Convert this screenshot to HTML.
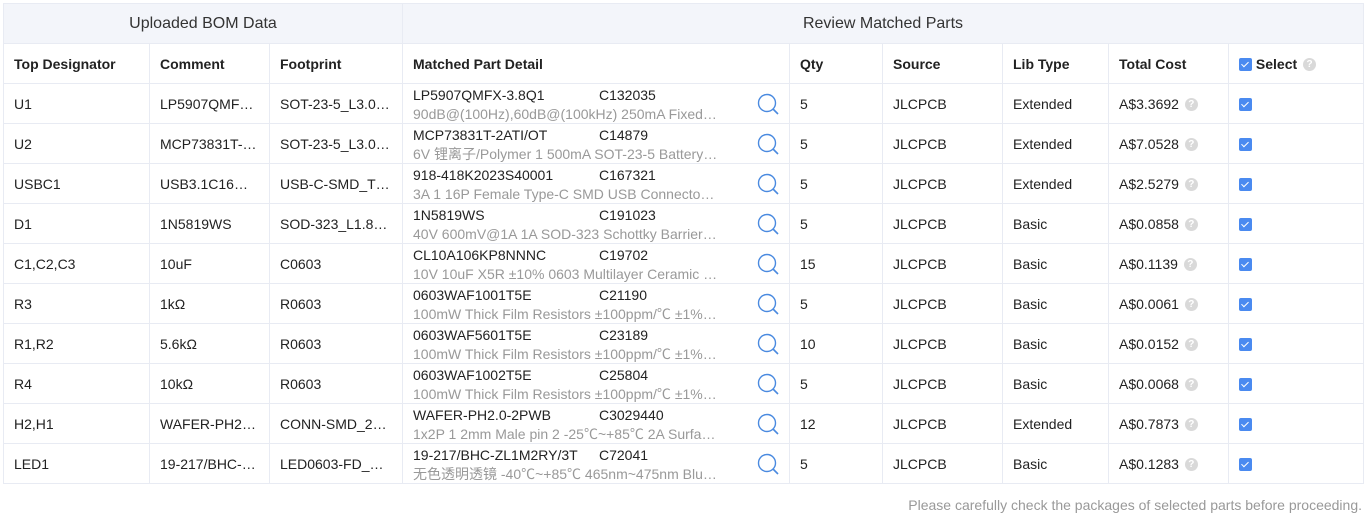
<!DOCTYPE html><html><head><meta charset="utf-8"><style>
body{margin:0;background:#fff;font-family:"Liberation Sans","Noto Sans CJK SC",sans-serif;font-size:14px;color:#222;}
table{position:absolute;left:3px;top:3px;border-collapse:collapse;table-layout:fixed;width:1360px;}
td,th{border:1px solid #e8ebf3;height:39px;padding:0 12px 0 10px;white-space:nowrap;overflow:hidden;text-overflow:ellipsis;text-align:left;line-height:16px}
tr.g th{background:#f3f5fa;font-weight:normal;font-size:16px;text-align:center;color:#333;padding:0}
tr.h th{font-weight:bold;color:#222}
.d{position:relative;padding:0}
.d .a{position:absolute;left:10px;top:3px;line-height:16px}
.d .c{position:absolute;left:196px;top:3px;line-height:16px}
.d .b{position:absolute;left:10px;top:22px;color:#999;width:305px;overflow:hidden;text-overflow:ellipsis;line-height:16px;height:16px}
.d svg{position:absolute;left:354px;top:9px}
.cb{display:inline-block;width:13px;height:13px;background:#4a8af0;border-radius:2px;vertical-align:middle;position:relative}
.cb:after{content:"";position:absolute;left:4px;top:2px;width:3px;height:6px;border:solid #fff;border-width:0 1.5px 1.5px 0;transform:rotate(45deg)}
.q{display:inline-block;width:13px;height:13px;border-radius:50%;background:#d9d9d9;color:#fff;font-size:10px;line-height:13px;text-align:center;vertical-align:middle;margin-left:2px;font-weight:bold}
.f{position:absolute;right:9px;top:497px;color:#999;font-size:14px}
</style></head><body>
<table>
<colgroup><col style="width:146px"><col style="width:120px"><col style="width:133px"><col style="width:387px"><col style="width:93px"><col style="width:120px"><col style="width:106px"><col style="width:120px"><col style="width:135px"></colgroup>
<tr class="g"><th colspan="3">Uploaded BOM Data</th><th colspan="6">Review Matched Parts</th></tr>
<tr class="h"><th>Top Designator</th><th>Comment</th><th>Footprint</th><th>Matched Part Detail</th><th>Qty</th><th>Source</th><th>Lib Type</th><th>Total Cost</th><th><span class="cb"></span> Select <span class="q">?</span></th></tr>
<tr><td>U1</td><td>LP5907QMFX-3.8Q1</td><td>SOT-23-5_L3.0-W1.7</td><td class="d"><span class="a">LP5907QMFX-3.8Q1</span><span class="c">C132035</span><div class="b">90dB@(100Hz),60dB@(100kHz) 250mA Fixed 3.8V</div><svg width="24" height="24" viewBox="0 0 24 24"><circle cx="10" cy="10" r="8.5" fill="none" stroke="#4a8ae0" stroke-width="1.4"/><path d="M16 16l5 5" stroke="#4a8ae0" stroke-width="1.6"/></svg></td><td>5</td><td>JLCPCB</td><td>Extended</td><td>A$3.3692 <span class="q">?</span></td><td><span class="cb"></span></td></tr>
<tr><td>U2</td><td>MCP73831T-2ATI/OT</td><td>SOT-23-5_L3.0-W1.7</td><td class="d"><span class="a">MCP73831T-2ATI/OT</span><span class="c">C14879</span><div class="b">6V 锂离子/Polymer 1 500mA SOT-23-5 Battery Management</div><svg width="24" height="24" viewBox="0 0 24 24"><circle cx="10" cy="10" r="8.5" fill="none" stroke="#4a8ae0" stroke-width="1.4"/><path d="M16 16l5 5" stroke="#4a8ae0" stroke-width="1.6"/></svg></td><td>5</td><td>JLCPCB</td><td>Extended</td><td>A$7.0528 <span class="q">?</span></td><td><span class="cb"></span></td></tr>
<tr><td>USBC1</td><td>USB3.1C16PFX</td><td>USB-C-SMD_TYPE</td><td class="d"><span class="a">918-418K2023S40001</span><span class="c">C167321</span><div class="b">3A 1 16P Female Type-C SMD USB Connectors USB</div><svg width="24" height="24" viewBox="0 0 24 24"><circle cx="10" cy="10" r="8.5" fill="none" stroke="#4a8ae0" stroke-width="1.4"/><path d="M16 16l5 5" stroke="#4a8ae0" stroke-width="1.6"/></svg></td><td>5</td><td>JLCPCB</td><td>Extended</td><td>A$2.5279 <span class="q">?</span></td><td><span class="cb"></span></td></tr>
<tr><td>D1</td><td>1N5819WS</td><td>SOD-323_L1.8-W1.3</td><td class="d"><span class="a">1N5819WS</span><span class="c">C191023</span><div class="b">40V 600mV@1A 1A SOD-323 Schottky Barrier Diodes</div><svg width="24" height="24" viewBox="0 0 24 24"><circle cx="10" cy="10" r="8.5" fill="none" stroke="#4a8ae0" stroke-width="1.4"/><path d="M16 16l5 5" stroke="#4a8ae0" stroke-width="1.6"/></svg></td><td>5</td><td>JLCPCB</td><td>Basic</td><td>A$0.0858 <span class="q">?</span></td><td><span class="cb"></span></td></tr>
<tr><td>C1,C2,C3</td><td>10uF</td><td>C0603</td><td class="d"><span class="a">CL10A106KP8NNNC</span><span class="c">C19702</span><div class="b">10V 10uF X5R ±10% 0603 Multilayer Ceramic Capacitors</div><svg width="24" height="24" viewBox="0 0 24 24"><circle cx="10" cy="10" r="8.5" fill="none" stroke="#4a8ae0" stroke-width="1.4"/><path d="M16 16l5 5" stroke="#4a8ae0" stroke-width="1.6"/></svg></td><td>15</td><td>JLCPCB</td><td>Basic</td><td>A$0.1139 <span class="q">?</span></td><td><span class="cb"></span></td></tr>
<tr><td>R3</td><td>1kΩ</td><td>R0603</td><td class="d"><span class="a">0603WAF1001T5E</span><span class="c">C21190</span><div class="b">100mW Thick Film Resistors ±100ppm/℃ ±1% 1kΩ</div><svg width="24" height="24" viewBox="0 0 24 24"><circle cx="10" cy="10" r="8.5" fill="none" stroke="#4a8ae0" stroke-width="1.4"/><path d="M16 16l5 5" stroke="#4a8ae0" stroke-width="1.6"/></svg></td><td>5</td><td>JLCPCB</td><td>Basic</td><td>A$0.0061 <span class="q">?</span></td><td><span class="cb"></span></td></tr>
<tr><td>R1,R2</td><td>5.6kΩ</td><td>R0603</td><td class="d"><span class="a">0603WAF5601T5E</span><span class="c">C23189</span><div class="b">100mW Thick Film Resistors ±100ppm/℃ ±1% 5.6kΩ</div><svg width="24" height="24" viewBox="0 0 24 24"><circle cx="10" cy="10" r="8.5" fill="none" stroke="#4a8ae0" stroke-width="1.4"/><path d="M16 16l5 5" stroke="#4a8ae0" stroke-width="1.6"/></svg></td><td>10</td><td>JLCPCB</td><td>Basic</td><td>A$0.0152 <span class="q">?</span></td><td><span class="cb"></span></td></tr>
<tr><td>R4</td><td>10kΩ</td><td>R0603</td><td class="d"><span class="a">0603WAF1002T5E</span><span class="c">C25804</span><div class="b">100mW Thick Film Resistors ±100ppm/℃ ±1% 10kΩ</div><svg width="24" height="24" viewBox="0 0 24 24"><circle cx="10" cy="10" r="8.5" fill="none" stroke="#4a8ae0" stroke-width="1.4"/><path d="M16 16l5 5" stroke="#4a8ae0" stroke-width="1.6"/></svg></td><td>5</td><td>JLCPCB</td><td>Basic</td><td>A$0.0068 <span class="q">?</span></td><td><span class="cb"></span></td></tr>
<tr><td>H2,H1</td><td>WAFER-PH2.0-2PWB</td><td>CONN-SMD_2P-P2.00</td><td class="d"><span class="a">WAFER-PH2.0-2PWB</span><span class="c">C3029440</span><div class="b">1x2P 1 2mm Male pin 2 -25℃~+85℃ 2A Surface Mount</div><svg width="24" height="24" viewBox="0 0 24 24"><circle cx="10" cy="10" r="8.5" fill="none" stroke="#4a8ae0" stroke-width="1.4"/><path d="M16 16l5 5" stroke="#4a8ae0" stroke-width="1.6"/></svg></td><td>12</td><td>JLCPCB</td><td>Extended</td><td>A$0.7873 <span class="q">?</span></td><td><span class="cb"></span></td></tr>
<tr><td>LED1</td><td>19-217/BHC-ZL1M2RY</td><td>LED0603-FD_BLUE</td><td class="d"><span class="a">19-217/BHC-ZL1M2RY/3T</span><span class="c">C72041</span><div class="b">无色透明透镜 -40℃~+85℃ 465nm~475nm Blue 0603</div><svg width="24" height="24" viewBox="0 0 24 24"><circle cx="10" cy="10" r="8.5" fill="none" stroke="#4a8ae0" stroke-width="1.4"/><path d="M16 16l5 5" stroke="#4a8ae0" stroke-width="1.6"/></svg></td><td>5</td><td>JLCPCB</td><td>Basic</td><td>A$0.1283 <span class="q">?</span></td><td><span class="cb"></span></td></tr>
</table>
<div class="f">Please carefully check the packages of selected parts before proceeding.</div>
</body></html>
